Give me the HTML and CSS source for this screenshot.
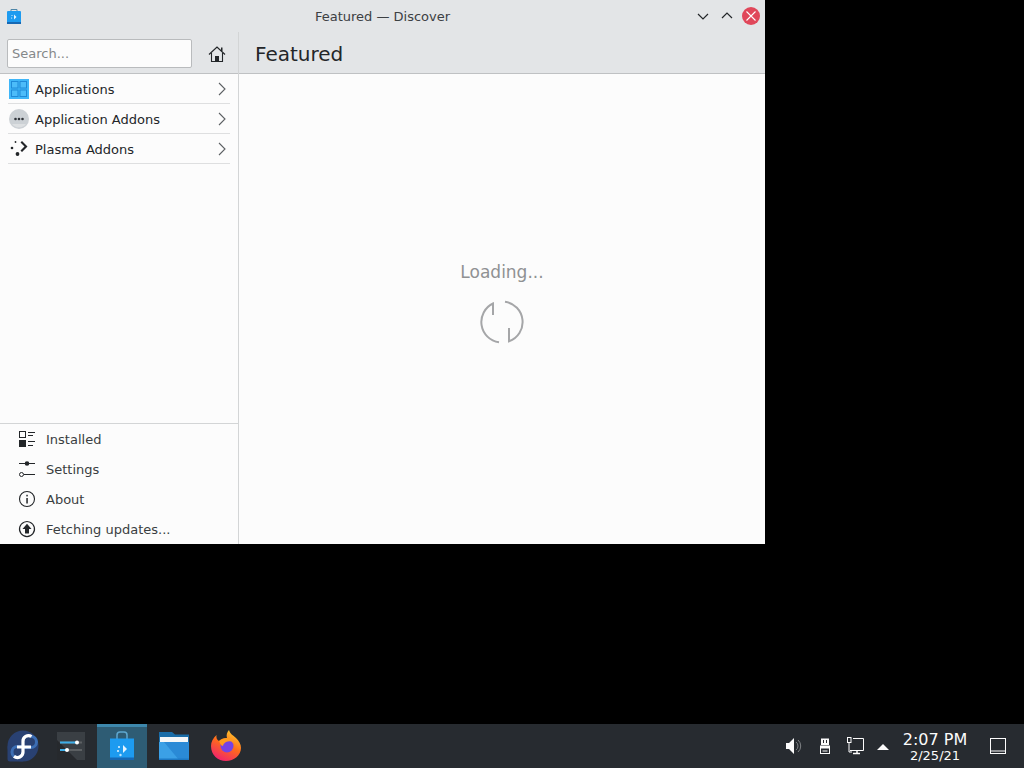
FILE: index.html
```html
<!DOCTYPE html>
<html lang="en">
<head>
    <meta charset="UTF-8">
    <title>Featured — Discover</title>
    <link rel="stylesheet" href="styles.css">
</head>
<body>

<div class="window">
    <div class="titlebar">
        <svg class="title-icon" width="16" height="16" viewBox="0 0 16 16">
            <path d="M5 4V1.500h6V4" fill="none" stroke="#4d86a8" stroke-width="1"/>
            <rect x="1" y="3" width="14" height="13" rx="1" fill="#1d9bf0"/>
            <rect x="1" y="14" width="14" height="2" fill="#1668b4"/>
            <path d="M8 6.500l2.500 2.500L8 11.500z" fill="#e6f5ff"/>
            <circle cx="6" cy="7.500" r=".6" fill="#e6f5ff"/>
            <circle cx="5.600" cy="10" r=".6" fill="#e6f5ff"/>
        </svg>
        <div class="title">Featured — Discover</div>
        <div class="win-buttons">
            <svg width="14" height="14" viewBox="0 0 14 14"><path d="M2 5l5 5 5-5" fill="none" stroke="#232629" stroke-width="1.2"/></svg>
            <svg width="14" height="14" viewBox="0 0 14 14"><path d="M2 9l5-5 5 5" fill="none" stroke="#232629" stroke-width="1.2"/></svg>
            <span class="close">
                <svg width="18" height="18" viewBox="0 0 18 18"><path d="M4.500 4.500l9 9M13.500 4.500l-9 9" stroke="#fff" stroke-width="1.1"/></svg>
            </span>
        </div>
    </div>

    <div class="content">
        <div class="sidebar">
            <div class="search-row">
                <input class="search" placeholder="Search...">
                <svg class="home" width="18" height="18" viewBox="0 0 18 18">
                    <path d="M1 9.500L9 2l8 7.500" fill="none" stroke="#232629" stroke-width="1.2"/>
                    <path d="M3.500 8v8.500h11V8" fill="none" stroke="#232629" stroke-width="1.100"/>
                    <rect x="7" y="11" width="4" height="5.500" fill="#232629"/>
                    <rect x="13" y="2.500" width="1.500" height="3.500" fill="#232629"/>
                </svg>
            </div>
            <div class="categories">
                <div class="cat">
                    <svg width="20" height="20" viewBox="0 0 20 20">
                        <rect width="20" height="20" fill="#3fb6f8"/>
                        <g fill="#4cbcf9" stroke="#1f8ad8" stroke-width="1">
                            <rect x="2.500" y="2.500" width="6.500" height="6.500"/>
                            <rect x="11" y="2.500" width="6.500" height="6.500"/>
                            <rect x="2.500" y="11" width="6.500" height="6.500"/>
                            <rect x="11" y="11" width="6.500" height="6.500"/>
                        </g>
                    </svg>
                    <span class="cat-label">Applications</span>
                    <svg class="chevron" width="10" height="14" viewBox="0 0 10 14"><path d="M2 1l6 6-6 6" fill="none" stroke="#5c6063" stroke-width="1.1"/></svg>
                </div>
                <div class="cat">
                    <svg width="20" height="20" viewBox="0 0 20 20">
                        <circle cx="10" cy="10" r="10" fill="#ccd1d5"/>
                        <path d="M3 15h14a9 9 0 0 1-14 0z" fill="#dde0e2"/>
                        <circle cx="6.500" cy="10" r="1.300" fill="#31363b"/>
                        <circle cx="10" cy="10" r="1.300" fill="#31363b"/>
                        <circle cx="13.500" cy="10" r="1.300" fill="#31363b"/>
                    </svg>
                    <span class="cat-label">Application Addons</span>
                    <svg class="chevron" width="10" height="14" viewBox="0 0 10 14"><path d="M2 1l6 6-6 6" fill="none" stroke="#5c6063" stroke-width="1.1"/></svg>
                </div>
                <div class="cat">
                    <svg width="20" height="20" viewBox="0 0 20 20" fill="#232629">
                        <path d="M13 2l5.500 5.500L13 13l-1.500-1.500 4-4-4-4z"/>
                        <circle cx="6.500" cy="3" r=".9"/>
                        <circle cx="3" cy="9" r="1.300"/>
                        <circle cx="8.500" cy="15" r="1.900"/>
                    </svg>
                    <span class="cat-label">Plasma Addons</span>
                    <svg class="chevron" width="10" height="14" viewBox="0 0 10 14"><path d="M2 1l6 6-6 6" fill="none" stroke="#5c6063" stroke-width="1.1"/></svg>
                </div>
            </div>
            <div class="actions">
                <div class="action">
                    <svg width="18" height="18" viewBox="0 0 18 18" fill="#232629">
                        <rect x="1.500" y="1.500" width="6" height="6" fill="none" stroke="#232629"/>
                        <rect x="1" y="10" width="7" height="7"/>
                        <rect x="10" y="2" width="7" height="1"/>
                        <rect x="10" y="5" width="5" height="1"/>
                        <rect x="10" y="11" width="7" height="1"/>
                        <rect x="10" y="15" width="5" height="1"/>
                    </svg>
                    <span>Installed</span>
                </div>
                <div class="action">
                    <svg width="18" height="18" viewBox="0 0 18 18" fill="#232629">
                        <rect x="1" y="3" width="16" height="1"/>
                        <circle cx="9" cy="3.500" r="2.300"/>
                        <rect x="6" y="14" width="11" height="1"/>
                        <circle cx="3.500" cy="14.500" r="2" fill="#fcfcfc" stroke="#232629"/>
                    </svg>
                    <span>Settings</span>
                </div>
                <div class="action">
                    <svg width="18" height="18" viewBox="0 0 18 18">
                        <circle cx="9" cy="9" r="7.500" fill="none" stroke="#232629" stroke-width="1.100"/>
                        <rect x="8.300" y="8" width="1.500" height="5.500" fill="#232629"/>
                        <rect x="8.300" y="4.800" width="1.500" height="1.600" fill="#232629"/>
                    </svg>
                    <span>About</span>
                </div>
                <div class="action">
                    <svg width="18" height="18" viewBox="0 0 18 18">
                        <path d="M6 2.200A7.500 7.500 0 1 0 12 2.200" fill="none" stroke="#232629" stroke-width="1.200"/>
                        <path d="M6 2.200L9 1.500 12 2.200" fill="none" stroke="#232629" stroke-width="1"/>
                        <path d="M9 3.800L13.500 9H11v4.500H7V9H4.500z" fill="#232629"/>
                    </svg>
                    <span>Fetching updates...</span>
                </div>
            </div>
        </div>

        <div class="main">
            <div class="page-header">Featured</div>
            <div class="page-body">
                <div class="loading">Loading...</div>
                <svg class="spinner" width="44" height="44" viewBox="0 0 44 44" fill="none" stroke="#a5a6a8" stroke-width="2">
                    <path d="M13 15V3.500A20.500 20.500 0 0 0 19 42.300"/>
                    <path d="M25 1.700A20.500 20.500 0 0 1 29 41.300V28"/>
                </svg>
            </div>
        </div>
    </div>
</div>

<div class="taskbar">
    <div class="launcher">
        <svg width="32" height="32" viewBox="0 0 32 32">
            <circle cx="16" cy="16" r="15.500" fill="#294172"/>
            <path d="M16 31.500H3a2.500 2.500 0 0 1-2.500-2.500V16" fill="#294172"/>
            <path d="M24 6.500a5.500 5.500 0 0 1 0 11H16" fill="none" stroke="#3c6eb4" stroke-width="3"/>
            <path d="M16 22a5.500 5.500 0 1 1-5.500-5.500H16" fill="none" stroke="#3c6eb4" stroke-width="3"/>
            <path d="M24.500 6.500a5.500 5.500 0 0 0-8.500 5v10.500a5.500 5.500 0 0 1-9 4.200M10 17h14" fill="none" stroke="#fff" stroke-width="3.200"/>
        </svg>
    </div>
    <div class="task">
        <svg width="28" height="28" viewBox="0 0 28 28">
            <rect width="28" height="28" fill="#3a3f44"/>
            <path d="M0 28V8L20 28z" fill="#26292d"/>
            <rect x="3" y="9.500" width="22" height="2" fill="#5c6063"/>
            <rect x="3" y="9.500" width="17" height="2" fill="#3daee9"/>
            <circle cx="20" cy="10.500" r="2" fill="#fff"/>
            <rect x="3" y="17" width="22" height="2" fill="#5c6063"/>
            <rect x="3" y="17" width="7" height="2" fill="#3daee9"/>
            <circle cx="10" cy="18" r="2" fill="#fff"/>
        </svg>
    </div>
    <div class="task active">
        <svg width="26" height="32" viewBox="0 0 26 32">
            <path d="M8 9V5a3 3 0 0 1 3-3h4a3 3 0 0 1 3 3v4" fill="none" stroke="#5ea7cf" stroke-width="1.500"/>
            <path d="M1 8.500h24V30H1z" fill="#1d9bf0"/>
            <rect x="1" y="27.500" width="24" height="2.500" fill="#1668b4"/>
            <path d="M14 15l4 4-4 4z" fill="#e6f5ff"/>
            <circle cx="10" cy="17" r="1" fill="#e6f5ff"/>
            <circle cx="9" cy="21" r="1" fill="#e6f5ff"/>
            <circle cx="11.500" cy="25" r="1.200" fill="#bfe6ff"/>
        </svg>
    </div>
    <div class="task">
        <svg class="folder" width="30" height="28" viewBox="0 0 30 28">
            <path d="M0 0h13l3 2.500h14V10H0z" fill="#1a6da8"/>
            <rect x="1" y="5" width="28" height="5" fill="#f5f7f8"/>
            <rect y="10" width="30" height="18" fill="#3ba0e6"/>
            <path d="M5 10h25v18H20z" fill="#2a8ad6"/>
            <path d="M0 26.500h30V28H0z" fill="#1c78c4"/>
        </svg>
    </div>
    <div class="task">
        <svg class="firefox" width="32" height="32" viewBox="0 0 32 32">
            <defs>
                <linearGradient id="foxBody" x1="0.8" y1="0" x2="0.3" y2="1">
                    <stop offset="0" stop-color="#ffd22e"/>
                    <stop offset="0.5" stop-color="#ff6a1c"/>
                    <stop offset="1" stop-color="#f0216f"/>
                </linearGradient>
            </defs>
            <path d="M19 0C20 4 23 5 26 8c3 3 5 6 5 10 0 7-7 13-15 13S1 25 1 16c0-4 2-8 5.500-11C6 8 7 10 9 11c2-2 5-3 8-3-1-3 0-6 2-8z" fill="url(#foxBody)"/>
            <circle cx="17" cy="16" r="6.500" fill="#7542e5"/>
            <path d="M9 11c2-2 5-3 8-3 3 0 6 2 7 4-3-1-6-1-8 0-2 1-3 3-3 4-2 0-3-3-4-5z" fill="#ff9a1f"/>
        </svg>
    </div>

    <div class="tray">
        <svg width="18" height="18" viewBox="0 0 18 18">
            <path d="M1 6h3l5-5v16l-5-5H1z" fill="#fcfcfc"/>
            <path d="M11 5a5 5 0 0 1 0 8M13 3a8 8 0 0 1 0 12" fill="none" stroke="#7f8285" stroke-width="1"/>
        </svg>
        <svg width="12" height="18" viewBox="0 0 12 18">
            <path d="M2 1.500h8V8H2z" fill="#fcfcfc"/>
            <path d="M4.500 3v3M7.500 3v3" stroke="#272b30"/>
            <rect x="1.500" y="9" width="9" height="7.500" fill="none" stroke="#fcfcfc"/>
            <rect x="1" y="9" width="10" height="2.500" fill="#fcfcfc"/>
            <path d="M3.500 14h5" stroke="#fcfcfc"/>
        </svg>
        <svg width="17" height="18" viewBox="0 0 17 18" fill="none" stroke="#fcfcfc">
            <path d="M6 1.500h10.500v12H3"/>
            <rect x=".5" y=".5" width="3.500" height="5"/>
            <path d="M2 6v9h3"/>
            <path d="M6 16.500h7M10 14v2" stroke-width="1.500"/>
        </svg>
        <svg class="tray-arrow" width="12" height="7" viewBox="0 0 12 7"><path d="M0 7l6-6 6 6z" fill="#fcfcfc"/></svg>
    </div>
    <div class="clock">
        <div class="time">2:07 PM</div>
        <div class="date">2/25/21</div>
    </div>
    <svg class="show-desktop" width="16" height="16" viewBox="0 0 16 16" fill="none">
        <rect x=".5" y=".5" width="15" height="15" stroke="#fcfcfc"/>
        <path d="M1 13h14" stroke="#fcfcfc"/>
    </svg>
</div>

</body>
</html>
```

FILE: styles.css
```css
html, body {
    height: 100%;
}
body {
    margin: 0;
    background: #000;
    font-family: "DejaVu Sans", sans-serif;
    font-size: 13px;
    color: #232629;
    display: flex;
    flex-direction: column;
    justify-content: space-between;
    overflow: hidden;
}
.window {
    width: 765px;
    height: 544px;
    background: #fcfcfc;
    display: flex;
    flex-direction: column;
}
.titlebar {
    height: 32px;
    flex: none;
    background: #e3e5e7;
    display: grid;
    grid-template-columns: 1fr auto 1fr;
    align-items: center;
    padding: 0 5px 0 6px;
}
.title {
    font-size: 13px;
    color: #3c4043;
    margin-left: -1px;
}
.win-buttons {
    display: flex;
    align-items: center;
    justify-content: flex-end;
    gap: 10px;
}
.close {
    width: 18px;
    height: 18px;
    margin-left: -2px;
    border-radius: 50%;
    background: #e0475a;
    display: block;
}
.close svg {
    display: block;
}
.content {
    flex: 1;
    display: flex;
    min-height: 0;
}
.sidebar {
    width: 238px;
    flex: none;
    border-right: 1px solid #d3d5d6;
    display: flex;
    flex-direction: column;
}
.search-row {
    height: 42px;
    flex: none;
    box-sizing: border-box;
    background: #e3e5e7;
    border-bottom: 1px solid #bfc1c3;
    display: flex;
    align-items: center;
    justify-content: space-between;
    padding: 0 12px 0 7px;
}
.search {
    width: 185px;
    height: 29px;
    box-sizing: border-box;
    border: 1px solid #b9bbbd;
    border-radius: 2px;
    background: #fcfcfc;
    padding: 0 4px;
    font-family: inherit;
    font-size: 13px;
    margin-top: 2px;
}
.search::placeholder {
    color: #85888a;
}
.home {
    margin-top: 3px;
}
.categories {
    flex: 1;
}
.cat {
    height: 30px;
    box-sizing: border-box;
    margin: 0 8px;
    padding: 1px 0 0 1px;
    border-bottom: 1px solid #dedfe0;
    display: flex;
    align-items: center;
    gap: 6px;
}
.cat-label {
    flex: 1;
}
.chevron {
    margin-right: 3px;
}
.actions {
    flex: none;
    border-top: 1px solid #d3d5d6;
    height: 121px;
    box-sizing: border-box;
}
.action {
    height: 30px;
    display: flex;
    align-items: center;
    gap: 10px;
    padding-left: 18px;
    color: #3a3e41;
}
.main {
    flex: 1;
    display: flex;
    flex-direction: column;
    min-width: 0;
}
.page-header {
    height: 42px;
    flex: none;
    box-sizing: border-box;
    background: #e3e5e7;
    border-bottom: 1px solid #bfc1c3;
    font-size: 20px;
    line-height: 45px;
    padding-left: 16px;
}
.page-body {
    flex: 1;
    display: flex;
    flex-direction: column;
    align-items: center;
    padding-top: 186px;
}
.loading {
    font-size: 17px;
    line-height: 24px;
    color: #8f9193;
    margin-bottom: 16px;
}
.taskbar {
    height: 44px;
    flex: none;
    background: #272b30;
    display: flex;
    align-items: center;
}
.launcher {
    width: 45px;
    display: flex;
    justify-content: center;
}
.launcher svg {
    margin-left: 1px;
}
.task {
    width: 50px;
    height: 44px;
    margin-left: 1px;
    display: flex;
    align-items: center;
    justify-content: center;
    box-sizing: border-box;
}
.task.active {
    background: #2e5c74;
    border-top: 3px solid #3d87ab;
    padding-bottom: 3px;
}
.folder {
    margin-left: 2px;
}
.firefox {
    margin-left: 4px;
}
.tray {
    margin-left: auto;
    display: flex;
    align-items: center;
    gap: 16px;
}
.tray-arrow {
    margin-left: -3px;
}
.clock {
    margin-left: 11px;
    width: 70px;
    text-align: center;
    white-space: nowrap;
    color: #fcfcfc;
}
.time {
    font-size: 16px;
    line-height: 19px;
}
.date {
    font-size: 13px;
    line-height: 14px;
}
.show-desktop {
    margin-left: 20px;
    margin-right: 18px;
}
```
